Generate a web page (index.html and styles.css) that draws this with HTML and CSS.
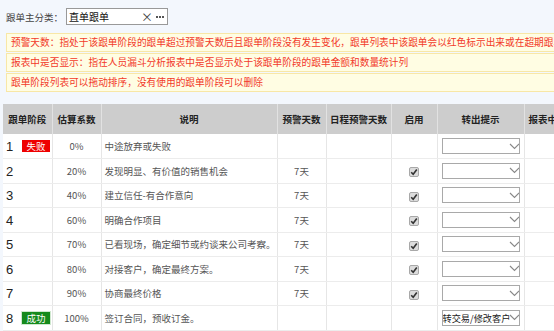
FILE: index.html
```html
<!DOCTYPE html>
<html lang="zh-CN">
<head>
  <meta charset="UTF-8">
  <title>跟单阶段设置</title>
  <link rel="stylesheet" href="styles.css">
</head>
<body>
  <div class="page">
    <div class="filter">
      <span class="filter-label">跟单主分类：</span>
      <div class="picker">
        <span class="picker-text">直单跟单</span>
        <span class="picker-clear">×</span>
        <span class="picker-more"><i></i><i></i><i></i></span>
      </div>
    </div>

    <div class="notice">预警天数：指处于该跟单阶段的跟单超过预警天数后且跟单阶段没有发生变化，跟单列表中该跟单会以红色标示出来或在超期跟单中显示</div>
    <div class="notice">报表中是否显示：指在人员漏斗分析报表中是否显示处于该跟单阶段的跟单金额和数量统计列</div>
    <div class="notice">跟单阶段列表可以拖动排序，没有使用的跟单阶段可以删除</div>

    <table class="stages">
      <colgroup>
        <col class="c-stage"><col class="c-rate"><col class="c-desc"><col class="c-warn">
        <col class="c-sched"><col class="c-on"><col class="c-tip"><col class="c-report">
      </colgroup>
      <thead>
        <tr>
          <th>跟单阶段</th><th>估算系数</th><th>说明</th><th>预警天数</th>
          <th>日程预警天数</th><th>启用</th><th>转出提示</th><th class="left">报表中是否显示</th>
        </tr>
      </thead>
      <tbody id="rows"></tbody>
    </table>
  </div>

  <script>
    const stages = [
      { no: 1, tag: 'fail', rate: '0%', desc: '中途放弃或失败', warn: '', on: false },
      { no: 2, rate: '20%', desc: '发现明显、有价值的销售机会', warn: '7天', on: true },
      { no: 3, rate: '40%', desc: '建立信任-有合作意向', warn: '7天', on: true },
      { no: 4, rate: '60%', desc: '明确合作项目', warn: '7天', on: true },
      { no: 5, rate: '70%', desc: '已看现场，确定细节或约谈来公司考察。', warn: '7天', on: true },
      { no: 6, rate: '80%', desc: '对接客户，确定最终方案。', warn: '7天', on: true },
      { no: 7, rate: '90%', desc: '协商最终价格', warn: '7天', on: true },
      { no: 8, tag: 'win', rate: '100%', desc: '签订合同，预收订金。', warn: '', on: false, tip: '转交易/修改客户' }
    ];

    const chevron = '<svg class="chev" width="11" height="7" viewBox="0 0 11 7"><path d="M1 1 L5.5 5.5 L10 1" fill="none" stroke="#888" stroke-width="1.1"/></svg>';
    const check = '<span class="check"><svg width="8" height="8" viewBox="0 0 8 8"><path d="M1.2 4.2 L3.2 6.3 L6.8 1.5" fill="none" stroke="#333" stroke-width="1.6"/></svg></span>';

    const rows = document.getElementById('rows');
    stages.forEach(s => {
      let tag = '';
      if (s.tag === 'fail') tag = '<span class="tag tag-fail">失败</span>';
      if (s.tag === 'win') tag = '<span class="tag tag-win">成功</span>';
      const tr = document.createElement('tr');
      tr.innerHTML =
        '<td class="stage"><span class="no">' + s.no + '</span>' + tag + '</td>' +
        '<td class="center">' + s.rate + '</td>' +
        '<td>' + s.desc + '</td>' +
        '<td class="center">' + s.warn + '</td>' +
        '<td></td>' +
        '<td class="center">' + (s.on ? check : '') + '</td>' +
        '<td><div class="select"><span class="select-text">' + (s.tip || '') + '</span>' + chevron + '</div></td>' +
        '<td></td>';
      rows.appendChild(tr);
    });
  </script>
</body>
</html>
```

FILE: styles.css
```css
* {
  box-sizing: border-box;
  margin: 0;
  padding: 0;
}
body {
  background-color: #f3f7fd;
  color: #333;
  font-family: "Noto Sans CJK SC", "Microsoft YaHei", sans-serif;
  font-size: 10px;
  width: 554px;
  height: 331px;
  overflow: hidden;
}
.page {
  padding: 8px 0 0 6px;
  width: 720px;
}
.filter {
  display: flex;
  align-items: center;
  gap: 4px;
  height: 17px;
  margin-bottom: 8px;
}
.filter-label {
  color: #444;
  font-size: 9.5px;
  white-space: nowrap;
  width: 56px;
}
.picker {
  display: flex;
  align-items: center;
  width: 102px;
  height: 17px;
  border: 1px solid #999;
  background: #fff;
  padding: 0 2px;
}
.picker-text {
  flex: 1;
  color: #111;
  font-size: 10px;
  line-height: 15px;
}
.picker-clear {
  color: #444;
  font-size: 12px;
  line-height: 15px;
  margin-right: 3px;
}
.picker-more {
  display: flex;
  gap: 1px;
  margin-right: 1px;
}
.picker-more i {
  width: 2px;
  height: 2px;
  background: #555;
}
.notice {
  background: #fffde3;
  border: 1px solid #f8e7a6;
  color: #f23a2a;
  height: 19px;
  line-height: 17px;
  padding-left: 4px;
  margin-bottom: 1px;
  white-space: nowrap;
  overflow: hidden;
  font-size: 9.7px;
}
.stages {
  margin: 12px 0 0 -3px;
  border-collapse: collapse;
  table-layout: fixed;
  width: 660px;
  background: #fff;
}
.c-stage { width: 49px; }
.c-rate { width: 49px; }
.c-desc { width: 176px; }
.c-warn { width: 49px; }
.c-sched { width: 65px; }
.c-on { width: 46px; }
.c-tip { width: 87px; }
.c-report { width: 139px; }
.stages th {
  background: #cdcdcd;
  color: #222;
  font-weight: bold;
  font-size: 9.5px;
  height: 30px;
  border-right: 1px solid #e2e2e2;
  white-space: nowrap;
  overflow: hidden;
}
.stages th.left {
  text-align: left;
  padding-left: 4px;
}
.stages td {
  height: 24.5px;
  border-right: 1px solid #e6e6e6;
  border-bottom: 1px solid #ececec;
  padding: 0 3px;
  color: #555;
  font-size: 9.5px;
  white-space: nowrap;
  overflow: hidden;
}
.stages td.center {
  text-align: center;
}
.no {
  display: inline-block;
  width: 16px;
  color: #222;
  font-size: 13px;
  font-family: "Liberation Sans", sans-serif;
  vertical-align: middle;
}
.tag {
  display: inline-block;
  width: 28px;
  height: 12px;
  line-height: 12px;
  text-align: center;
  color: #fff;
  font-size: 9.5px;
  vertical-align: middle;
}
.tag-fail {
  background: #ee0000;
}
.tag-win {
  background: #158a1c;
  outline: 1px solid #cfe8cf;
}
.check {
  display: inline-flex;
  align-items: center;
  justify-content: center;
  width: 10px;
  height: 10px;
  border: 1px solid #a8a8a8;
  border-radius: 2px;
  background: #dcdcdc;
  vertical-align: middle;
}
.select {
  display: flex;
  align-items: center;
  width: 78px;
  height: 16px;
  margin-left: 1px;
  border: 1px solid #a9a9a9;
  background: #fff;
  overflow: hidden;
}
.select-text {
  flex: none;
  width: 70px;
  color: #222;
  font-size: 9.2px;
  line-height: 14px;
  white-space: nowrap;
  overflow: hidden;
}
.chev {
  flex: none;
  margin-left: -4px;
}
```
